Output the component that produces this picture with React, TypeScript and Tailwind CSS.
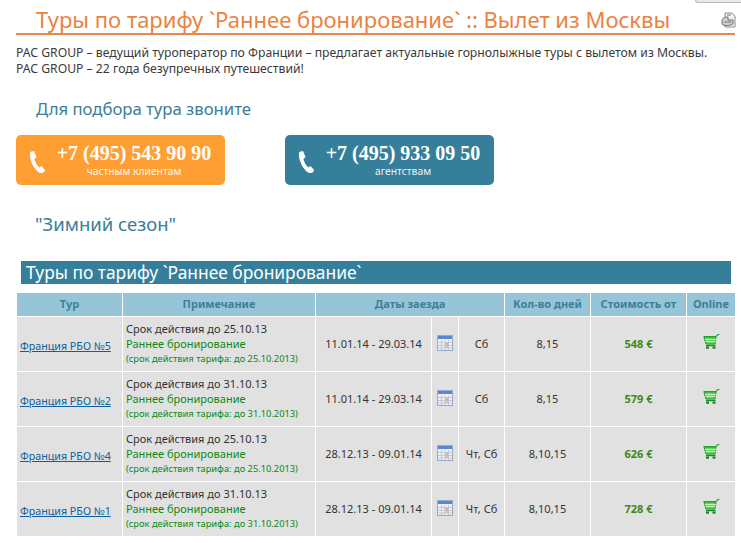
const rows = [
  { tour: 'Франция РБО №5', until: '25.10.13', full: '25.10.2013', dates: '11.01.14 - 29.03.14', weekdays: 'Сб', days: '8,15', price: '548 €' },
  { tour: 'Франция РБО №2', until: '31.10.13', full: '31.10.2013', dates: '11.01.14 - 29.03.14', weekdays: 'Сб', days: '8,15', price: '579 €' },
  { tour: 'Франция РБО №4', until: '25.10.13', full: '25.10.2013', dates: '28.12.13 - 09.01.14', weekdays: 'Чт, Сб', days: '8,10,15', price: '626 €' },
  { tour: 'Франция РБО №1', until: '31.10.13', full: '31.10.2013', dates: '28.12.13 - 09.01.14', weekdays: 'Чт, Сб', days: '8,10,15', price: '728 €' },
];

function PhoneIcon() {
  return (
    <svg width="17" height="24" viewBox="0 0 17 24" className="shrink-0">
      <path d="M1 3 C1 2 2 1.5 3 1.5 L5 1 L7.5 7 L5.5 9 C6 12 8 15.5 10.5 17.5 L12.5 16 L16 20 C16 21 14.5 23 13 23 C10.5 23.5 8 21.5 6 18.5 C3 14.5 0.5 8.5 1 3 Z" fill="#fff" />
    </svg>
  );
}

function CalendarIcon() {
  return (
    <svg width="16" height="16" viewBox="0 0 16 16">
      <rect x="0.5" y="0.5" width="15" height="15" fill="#eef0f6" stroke="#9aa9c6" />
      <rect x="1" y="1" width="14" height="3" fill="#5a86d4" />
      <path d="M1 7.5H15M1 10.5H15M1 13H15M4.5 5V15M8 5V15M11.5 5V15" stroke="#bfc8dc" strokeWidth="1" />
      <rect x="8.5" y="8" width="3" height="2.5" fill="#dcb08a" />
      <rect x="8.5" y="11" width="3" height="2" fill="#dcc0a4" />
    </svg>
  );
}

function CartIcon() {
  return (
    <svg width="17" height="15" viewBox="0 0 17 15">
      <path d="M0.5 2.5H13L15 0.5H16.5" fill="none" stroke="#2aa83a" strokeWidth="1.2" />
      <path d="M1 3H13L12 10H3Z" fill="#62d85c" stroke="#1f9a2e" strokeWidth="1" />
      <path d="M2 5.5H13M2.5 7.5H12.5" stroke="#c4f4b8" strokeWidth="1" />
      <path d="M3 11.5H12.5" stroke="#1c8a2a" strokeWidth="1.4" />
      <rect x="3" y="12.5" width="3" height="2.2" fill="#1a8427" />
      <rect x="9.5" y="12.5" width="3" height="2.2" fill="#1a8427" />
    </svg>
  );
}

function PrintIcon() {
  return (
    <svg width="16" height="17" viewBox="0 0 16 17">
      <path d="M4 1H11L14 4V15H4Z" fill="#f2f2f2" stroke="#8c8c8c" />
      <path d="M1 9C1 6 4 5 7 5V8L12 8V12C8 14 3 14 1 12Z" fill="#cfcfcf" stroke="#6e6e6e" />
      <path d="M6 3H10M3 10H10" stroke="#777" />
    </svg>
  );
}

function CallCard({ color, phone, label }: { color: string; phone: string; label: string }) {
  return (
    <div className={`flex h-[50px] w-[209px] items-start rounded-[5px] pl-[13px] pt-[8px] ${color}`}>
      <div className="mt-[7px]">
        <PhoneIcon />
      </div>
      <div className="ml-[8px] flex w-[160px] flex-col items-center text-white">
        <span className="font-['Liberation_Serif',serif] text-[20px] leading-[20px] font-bold whitespace-nowrap">{phone}</span>
        <span className="mt-[2px] text-[10.3px] leading-[13px] opacity-90">{label}</span>
      </div>
    </div>
  );
}

export default function App() {
  const th = 'bg-[#95c5d6] text-center text-[11px] text-[#3d7f99]';
  const td = 'bg-[#e1e1e1] text-center text-[11px] text-[#333]';
  return (
    <div className="relative h-[543px] w-[741px] overflow-hidden bg-white font-['Noto_Sans','Liberation_Sans',sans-serif]">
      <div className="absolute top-0 right-0 h-[3px] w-[46px] rounded-bl-[4px] border-b border-l border-[#bbb] bg-[#e9e9e9]" />
      <div className="absolute top-[12px] right-[4px]">
        <PrintIcon />
      </div>

      <div className="pt-[6px] pl-[16px]">
        <h1 className="h-[29px] w-[719px] border-b-2 border-[#e68a4b] pl-[20px] text-[22px] leading-[26px] whitespace-nowrap text-[#ea833f]">
          Туры по тарифу `Раннее бронирование` :: Вылет из Москвы
        </h1>
        <p className="mt-[10px] text-[12.2px] leading-[16px] whitespace-nowrap text-[#3a3a3a]">
          PAC GROUP – ведущий туроператор по Франции – предлагает актуальные горнолыжные туры с вылетом из Москвы.
          <br />
          PAC GROUP – 22 года безупречных путешествий!
        </p>
        <h2 className="mt-[20px] pl-[20px] text-[16.7px] leading-[24px] text-[#3b7d97]">Для подбора тура звоните</h2>
        <div className="mt-[14px] flex gap-[60px]">
          <CallCard color="bg-[#ff9f33]" phone="+7 (495) 543 90 90" label="частным клиентам" />
          <CallCard color="bg-[#367f9b]" phone="+7 (495) 933 09 50" label="агентствам" />
        </div>
        <h2 className="mt-[25px] pl-[19px] text-[18.5px] leading-[28px] text-[#3b7d97]">"Зимний сезон"</h2>
      </div>

      <div className="mt-[23px] ml-[21px] h-[23px] w-[710px] bg-[#367f9b] pl-[5px] text-[17.4px] leading-[23px] whitespace-nowrap text-white">
        Туры по тарифу `Раннее бронирование`
      </div>

      <table className="mt-[8px] ml-[16px] w-[720px] table-fixed border-separate border-spacing-[1px]">
        <colgroup>
          <col className="w-[105px]" />
          <col className="w-[192px]" />
          <col className="w-[115px]" />
          <col className="w-[26px]" />
          <col className="w-[45px]" />
          <col className="w-[85px]" />
          <col className="w-[95px]" />
          <col className="w-[48px]" />
        </colgroup>
        <thead>
          <tr className="h-[23px]">
            <th className={th}>Тур</th>
            <th className={th}>Примечание</th>
            <th className={th} colSpan={3}>Даты заезда</th>
            <th className={th}>Кол-во дней</th>
            <th className={th}>Стоимость от</th>
            <th className={th}>Online</th>
          </tr>
        </thead>
        <tbody>
          {rows.map((row) => (
            <tr key={row.tour} className="h-[54px]">
              <td className="bg-[#e1e1e1] pl-[3px] text-left">
                <a href="#" className="text-[10.7px] whitespace-nowrap text-[#0f5f9e] underline">{row.tour}</a>
              </td>
              <td className="bg-[#e1e1e1] pl-[3px] text-left">
                <div className="text-[11px] leading-[15px] text-[#333]">Срок действия до {row.until}</div>
                <div className="text-[11px] leading-[15px] text-[#0c8a12]">Раннее бронирование</div>
                <div className="text-[9.3px] leading-[16px] whitespace-nowrap text-[#0c8a12]">(срок действия тарифа: до {row.full})</div>
              </td>
              <td className={td}>{row.dates}</td>
              <td className={td}>
                <div className="flex justify-center pb-[2px]"><CalendarIcon /></div>
              </td>
              <td className={td}>{row.weekdays}</td>
              <td className={td}>{row.days}</td>
              <td className="bg-[#e1e1e1] text-center text-[11px] font-bold text-[#3f8a12]">{row.price}</td>
              <td className={td}>
                <div className="flex justify-center pb-[5px]"><CartIcon /></div>
              </td>
            </tr>
          ))}
        </tbody>
      </table>
    </div>
  );
}
